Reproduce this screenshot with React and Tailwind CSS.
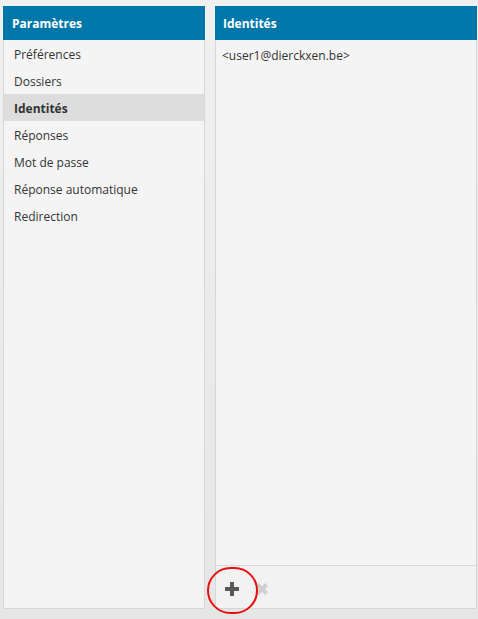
import React from "react";

const sections = [
  "Préférences",
  "Dossiers",
  "Identités",
  "Réponses",
  "Mot de passe",
  "Réponse automatique",
  "Redirection",
];

function PlusIcon() {
  return (
    <svg width="16" height="16" viewBox="0 0 16 16" className="text-[#595959]">
      <path d="M6 1h4v5h5v4h-5v5H6v-5H1V6h5z" fill="currentColor" />
    </svg>
  );
}

function DeleteIcon() {
  return (
    <svg width="14" height="14" viewBox="0 0 14 14" className="text-[#cfcfcf]">
      <path d="M2.5 2.5l9 9M11.5 2.5l-9 9" stroke="currentColor" strokeWidth="4" strokeLinecap="butt" />
    </svg>
  );
}

export default function App() {
  const selected = "Identités";

  return (
    <div
      className="w-[478px] h-[619px] bg-gradient-to-b from-[#f0f0f0] to-[#e6e6e6] pt-[6px] pl-[3px] flex gap-[10px] text-[12px] text-[#333]"
      style={{ fontFamily: '"Open Sans", "Noto Sans", sans-serif' }}
    >
      <div className="w-[202px] h-[603px] border border-[#d6d6d6] bg-[#f4f4f4] flex flex-col">
        <div className="h-[34px] bg-[#0077a9] text-white font-bold flex items-center px-[9px] pt-[1px] -mt-px -mx-px">
          Paramètres
        </div>
        <ul className="flex flex-col">
          {sections.map((s) => (
            <li
              key={s}
              className={
                s === selected
                  ? "h-[27px] flex items-center pl-[10px] pt-[2px] bg-[#dddddd] font-bold text-[#333]"
                  : "h-[27px] flex items-center pl-[10px] pt-[2px]"
              }
            >
              {s}
            </li>
          ))}
        </ul>
      </div>

      <div className="relative w-[262px] h-[603px] border border-[#d6d6d6] bg-[#f4f4f4] flex flex-col">
        <div className="h-[34px] bg-[#0077a9] text-white font-bold flex items-center px-[8px] pt-[1px] -mt-px -mx-px">
          Identités
        </div>
        <div className="flex-1 pl-[6px] pt-[7px]">&lt;user1@dierckxen.be&gt;</div>
        <div className="h-[43px] border-t border-[#d9d9d9] bg-[#f2f2f2] flex items-center gap-[15px] pl-[8px] pt-[3px]">
          <PlusIcon />
          <DeleteIcon />
        </div>
        <div className="absolute left-[-9px] top-[560px] w-[51px] h-[47px] rounded-full border-[2px] border-[#e8100f]" />
      </div>
    </div>
  );
}
